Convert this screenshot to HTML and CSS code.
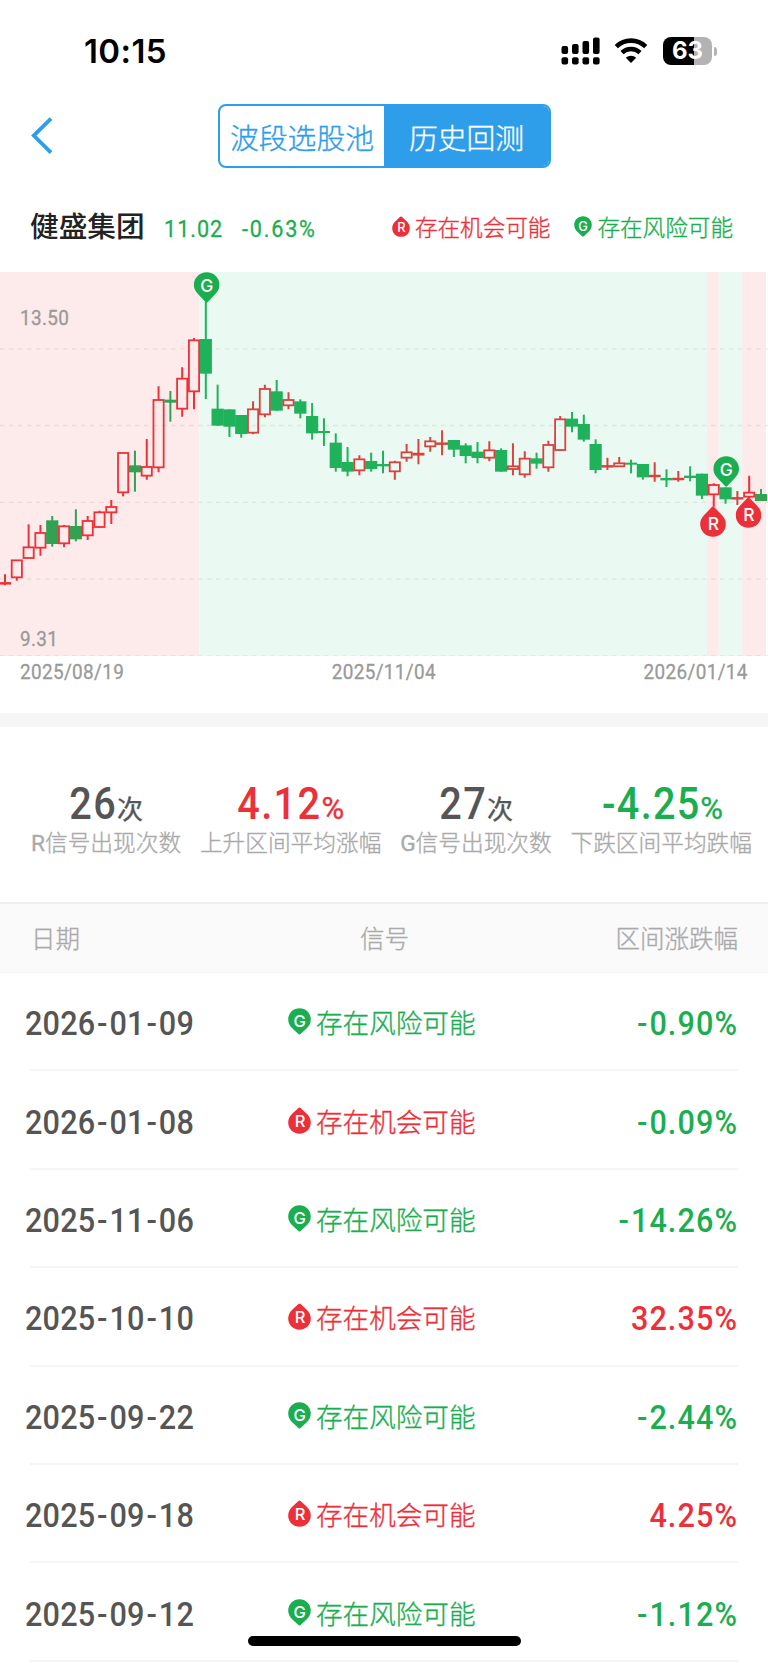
FILE: index.html
```html
<!DOCTYPE html>
<html lang="zh-CN">
<head>
  <meta charset="UTF-8">
  <meta name="viewport" content="width=device-width, initial-scale=1.0">
  <title>历史回测</title>
  <link rel="stylesheet" href="styles.css">
</head>
<body>
  <svg class="defs" width="0" height="0">
    <symbol id="pin-g" viewBox="0 0 26 31">
      <path d="M13 0.3C20 0.3 25.8 5.8 25.8 12.8C25.8 17.5 23.4 20.4 20.6 23.2L13.9 30.2Q13 31 12.1 30.2L5.4 23.2C2.6 20.4 0.2 17.5 0.2 12.8C0.2 5.8 6 0.3 13 0.3Z" fill="#1aae50"/>
      <text x="13.1" y="19.7" class="pin-letter">G</text>
    </symbol>
    <symbol id="pin-r" viewBox="0 0 26 31">
      <path d="M13 30.7C20 30.7 25.8 25.2 25.8 18.2C25.8 13.5 23.4 10.6 20.6 7.8L13.9 0.8Q13 0 12.1 0.8L5.4 7.8C2.6 10.6 0.2 13.5 0.2 18.2C0.2 25.2 6 30.7 13 30.7Z" fill="#ec3039"/>
      <text x="13.3" y="23.8" class="pin-letter">R</text>
    </symbol>
    <symbol id="tag-g" viewBox="0 0 23 27">
      <path d="M11.5 0.2C17.8 0.2 22.8 5.1 22.8 11.4C22.8 15.4 20.9 18.5 18 21L12.6 25.9Q11.5 26.9 10.4 25.9L5 21C2.1 18.5 0.2 15.4 0.2 11.4C0.2 5.1 5.2 0.2 11.5 0.2Z" fill="#1aae50"/>
      <text x="11.6" y="18.7" class="tag-letter">G</text>
    </symbol>
    <symbol id="tag-r" viewBox="0 0 23 27">
      <path d="M11.5 26.8C17.8 26.8 22.8 21.9 22.8 15.6C22.8 11.6 20.9 8.5 18 6L12.6 1.1Q11.5 0.1 10.4 1.1L5 6C2.1 8.5 0.2 11.6 0.2 15.6C0.2 21.9 5.2 26.8 11.5 26.8Z" fill="#ec3039"/>
      <text x="12" y="20.3" class="tag-letter">R</text>
    </symbol>
  </svg>

  <div class="status-bar">
    <span class="time">10:15</span>
    <div class="status-icons">
      <svg width="39" height="28" viewBox="0 0 39 28">
        <rect x="0.5" y="9" width="6.6" height="8" rx="2"/>
        <rect x="11" y="7" width="6.6" height="10" rx="2"/>
        <rect x="21.5" y="4" width="6.6" height="13" rx="2"/>
        <rect x="32" y="0.5" width="6.6" height="16.5" rx="2"/>
        <rect x="0.5" y="20.3" width="6.6" height="7.2" rx="2"/>
        <rect x="11" y="20.3" width="6.6" height="7.2" rx="2"/>
        <rect x="21.5" y="20.3" width="6.6" height="7.2" rx="2"/>
        <rect x="32" y="20.3" width="6.6" height="7.2" rx="2"/>
      </svg>
      <svg class="wifi" width="34" height="26" viewBox="0 0 34 26">
        <path d="M2.3 8.6A21 21 0 0 1 31.7 8.6" fill="none" stroke="#000" stroke-width="4.6"/>
        <path d="M8 14.6A12.9 12.9 0 0 1 26 14.6" fill="none" stroke="#000" stroke-width="4.4"/>
        <path d="M17 25L11.8 19.8A7.4 7.4 0 0 1 22.2 19.8Z"/>
      </svg>
      <div class="battery">63</div>
      <div class="battery-tip"></div>
    </div>
  </div>

  <div class="nav">
    <svg class="back" width="22" height="38" viewBox="0 0 22 38">
      <path d="M20 1.6L2.8 18.6L20 35.6" fill="none" stroke="#2e9dea" stroke-width="3.8"/>
    </svg>
    <div class="tabs">
      <div class="tab">波段选股池</div>
      <div class="tab active">历史回测</div>
    </div>
  </div>

  <div class="stock">
    <span class="name">健盛集团</span>
    <span class="price">11.02</span>
    <span class="change"><i>-</i>0.63%</span>
    <div class="legend">
      <span class="signal red"><svg><use href="#tag-r"/></svg>存在机会可能</span>
      <span class="signal green"><svg><use href="#tag-g"/></svg>存在风险可能</span>
    </div>
  </div>

  <div class="chart">
    <svg id="kline" width="768" height="384" viewBox="0 0 768 384"></svg>
    <div class="dates">
      <span>2025/08/19</span>
      <span>2025/11/04</span>
      <span>2026/01/14</span>
    </div>
  </div>

  <div class="stats">
    <div class="stat">
      <div class="value"><span class="num">26</span><small class="unit">次</small></div>
      <div class="label"><b>R</b>信号出现次数</div>
    </div>
    <div class="stat">
      <div class="value red"><span class="num wide">4.12</span><small>%</small></div>
      <div class="label">上升区间平均涨幅</div>
    </div>
    <div class="stat">
      <div class="value"><span class="num">27</span><small class="unit">次</small></div>
      <div class="label"><b>G</b>信号出现次数</div>
    </div>
    <div class="stat">
      <div class="value green"><span class="num wide"><i>-</i>4.25</span><small>%</small></div>
      <div class="label">下跌区间平均跌幅</div>
    </div>
  </div>

  <div class="table-head">
    <span>日期</span>
    <span>信号</span>
    <span>区间涨跌幅</span>
  </div>
  <div id="rows"></div>

  <div class="home-bar"></div>

  <script src="script.js"></script>
</body>
</html>
```
FILE: styles.css
```css
body {
  margin: 0;
  height: 1663px;
  overflow: hidden;
  background: #fff;
  color: #555;
  font-family: Roboto, "Noto Sans CJK SC", sans-serif;
}
.defs { position: absolute; }
.red { color: #ec3039; }
.green { color: #1aae50; }
i { font-style: normal; }

.pin-letter, .tag-letter {
  font-family: Inter, sans-serif;
  font-weight: 500;
  fill: #fff;
  text-anchor: middle;
  -webkit-text-stroke: 0;
}
.pin-letter { font-size: 17.5px; }
.tag-letter { font-size: 16.5px; }

/* light text, slightly thickened */
.tab, .signal, .label, .table-head {
  font-weight: 300;
  -webkit-text-stroke: 0.35px;
}

/* narrow digits */
.price, .change, .dates span, .num, .date, .rate {
  display: inline-block;
  transform: scaleX(0.9);
  transform-origin: left;
}
.price, .change, .dates span { -webkit-text-stroke: 0.3px; }

/* status bar */
.status-bar {
  display: flex;
  justify-content: space-between;
  align-items: center;
  box-sizing: border-box;
  height: 102px;
  padding: 0 51px 0 84px;
}
.time {
  font: 600 33px Inter, sans-serif;
  letter-spacing: 0.4px;
  color: #000;
}
.status-icons { display: flex; align-items: center; }
.wifi { margin: 0 15px 0 14px; }
.battery {
  width: 49px;
  height: 28px;
  border-radius: 8px;
  background: linear-gradient(90deg, #000 31px, #b3b3b3 31px);
  text-align: center;
  font: 700 24px/28px Inter, sans-serif;
  color: #fff;
}
.battery-tip {
  width: 3px;
  height: 9px;
  margin-left: 2px;
  border-radius: 0 4px 4px 0;
  background: #b3b3b3;
}

/* nav */
.nav {
  display: flex;
  height: 66px;
  padding: 2px 0 0 31px;
}
.back { margin-top: 13px; }
.tabs {
  display: flex;
  box-sizing: border-box;
  width: 333px;
  height: 64px;
  margin-left: 165px;
  border: 2px solid #2e9dea;
  border-radius: 8px;
  overflow: hidden;
}
.tab {
  width: 164px;
  text-align: center;
  font-size: 28.8px;
  line-height: 66px;
  white-space: nowrap;
  color: #2e9dea;
}
.tab.active {
  flex: 1;
  background: #2e9dea;
  color: #fff;
}

/* stock title */
.stock {
  display: flex;
  align-items: baseline;
  height: 102px;
  padding: 0 35px 0 30px;
  line-height: 115px;
  color: #1aae50;
}
.name {
  font-size: 28.7px;
  font-weight: 500;
  color: #222;
}
.price { margin-left: 19px; font-size: 24px; letter-spacing: 1.1px; }
.change { margin-left: 12px; font-size: 24px; letter-spacing: 2px; }
.legend { display: flex; gap: 24px; margin-left: auto; }
.signal {
  display: inline-flex;
  align-items: center;
  font-size: 22.6px;
}
.signal svg { width: 18px; height: 21px; margin: -3px 5px 0 0; }

/* chart */
.chart { height: 441px; border-bottom: 14px solid #f5f5f5; }
.chart svg { display: block; }
.axis { font-size: 21px; fill: #999; stroke: #999; stroke-width: 0.3px; letter-spacing: 0.4px; }
.dates {
  display: flex;
  justify-content: space-between;
  padding: 2px 20px 0 20px;
  font-size: 21px;
  line-height: 28px;
  letter-spacing: 0.4px;
  color: #999;
}
.dates span:nth-child(2) { transform-origin: center; }
.dates span:nth-child(3) { transform-origin: right; }

/* stats */
.stats {
  display: flex;
  justify-content: space-between;
  box-sizing: border-box;
  height: 175px;
  padding: 52px 16px 0 31px;
}
.stat { text-align: center; }
.value {
  height: 50px;
  font-size: 44px;
  line-height: 50px;
  font-weight: 500;
  white-space: nowrap;
}
.value small { font-size: 31px; font-weight: 400; -webkit-text-stroke: 0.4px; }
.value small.unit { font-size: 26px; }
.num {
  margin-left: -5px;
  letter-spacing: 1.5px;
  transform-origin: right;
}
.num.wide { margin-left: -9px; }
.label {
  font-size: 22.7px;
  line-height: 30px;
  color: #aaa;
}
.label b { font-weight: 400; }

/* table */
.table-head {
  display: grid;
  grid-template-columns: 1fr 1fr 1fr;
  box-sizing: border-box;
  height: 71px;
  padding: 0 30px 0 31px;
  border-top: 2px solid #f0f0f0;
  border-bottom: 1px solid #f5f5f5;
  background: #fafafa;
  font-size: 24.5px;
  line-height: 71px;
  color: #aaa;
}
.table-head :nth-child(2) { text-align: center; }
.table-head :nth-child(3) { text-align: right; }
.row {
  display: grid;
  grid-template-columns: 262px 1fr 200px;
  align-items: center;
  box-sizing: border-box;
  height: 98.4px;
  margin: 0 30px;
  border-bottom: 2px solid #f5f5f5;
}
.date {
  margin: 4px 0 0 -5px;
  font-size: 34px;
  font-weight: 500;
  letter-spacing: 0.2px;
}
.date i { margin: 0 2px; }
.row .signal { margin: 1px 0 0 -4px; font-size: 26.6px; }
.row .signal svg { width: 23px; height: 27px; margin: 0 5px 0 0; }
.rate {
  margin: 4px 0 0 0;
  text-align: right;
  font-size: 34px;
  font-weight: 500;
  letter-spacing: 1.2px;
  transform-origin: right;
}
.rate i { margin-right: 1px; }

.home-bar {
  position: fixed;
  left: 248px;
  bottom: 17px;
  width: 273px;
  height: 10px;
  border-radius: 5px;
  background: #000;
}
```
FILE: script.js
```javascript
// [up, high, body top, body bottom, low], in thirds of a pixel
const candles = [
  [1, 907, 933, 935, 940], [1, 865, 865, 916, 926], [1, 757, 826, 858, 858], [1, 759, 783, 827, 851],
  [0, 732, 745, 816, 824], [1, 759, 763, 814, 826], [0, 712, 762, 802, 808], [1, 732, 747, 790, 804],
  [1, 716, 721, 765, 767], [1, 684, 705, 721, 756], [1, 543, 543, 661, 673], [0, 536, 580, 601, 659],
  [1, 501, 585, 611, 623], [1, 343, 384, 586, 601], [0, 357, 383, 392, 449], [1, 286, 320, 410, 434],
  [1, 198, 205, 358, 412], [0, 89, 201, 305, 381], [0, 338, 410, 461, 461], [0, 412, 412, 464, 495],
  [0, 429, 429, 486, 497], [1, 388, 412, 482, 487], [1, 338, 351, 427, 436], [0, 324, 358, 416, 416],
  [1, 361, 384, 400, 412], [0, 382, 388, 425, 439], [0, 393, 432, 484, 503], [0, 439, 477, 483, 522],
  [0, 484, 512, 588, 599], [0, 525, 570, 599, 613], [1, 550, 562, 595, 610], [0, 542, 567, 591, 599],
  [0, 536, 576, 583, 604], [1, 566, 571, 598, 623], [1, 516, 541, 557, 569], [1, 501, 545, 548, 577],
  [1, 495, 508, 523, 539], [1, 475, 514, 516, 550], [0, 504, 504, 533, 555], [0, 514, 520, 552, 574],
  [0, 510, 539, 558, 574], [1, 508, 535, 557, 568], [0, 529, 534, 599, 599], [1, 514, 583, 591, 610],
  [1, 538, 560, 607, 617], [0, 542, 559, 575, 590], [1, 506, 519, 586, 599], [1, 432, 442, 534, 537],
  [0, 420, 440, 464, 481], [0, 428, 456, 503, 509], [0, 502, 516, 594, 604], [1, 557, 582, 584, 594],
  [1, 555, 574, 583, 583], [0, 563, 572, 578, 604], [0, 576, 576, 616, 623], [1, 571, 611, 613, 629],
  [0, 592, 618, 625, 645], [1, 597, 620, 622, 629], [0, 583, 611, 618, 628], [0, 605, 605, 671, 681],
  [1, 634, 639, 667, 704], [0, 646, 646, 682, 695], [1, 657, 678, 680, 699], [1, 611, 662, 674, 679],
  [0, 651, 666, 687, 687]
];

// signal zones: start, end, type
const zones = [
  [0, 199.3, 'R'], [199.3, 707, 'G'], [707, 718.8, 'R'], [718.8, 742.2, 'G'], [742.2, 766, 'R']
];

let svg = '';
zones.forEach(([from, to, type]) => {
  svg += `<rect x="${from}" y="0" width="${to - from}" height="384" fill="${type === 'R' ? '#fdeaea' : '#eafaf2'}"/>`;
});

[76.8, 153.5, 230.4, 307.2, 383.8].forEach(y => {
  svg += `<path d="M0 ${y}H768" stroke="#000" stroke-opacity="0.07" stroke-width="1.3" stroke-dasharray="4.5 4.5"/>`;
});

candles.forEach(([up, h, t, b, l], i) => {
  const x = 5 + i * 11.8125;
  const inRed = zones.find(z => x < z[1])[2] === 'R';
  [h, t, b, l] = [h / 3, t / 3, b / 3, l / 3];
  if (up) {
    const color = inRed ? '#ee3038' : '#d9423f';
    svg += `<path d="M${x} ${h}V${t}M${x} ${b}V${l}" stroke="${color}" stroke-width="2"/>`;
    svg += `<rect x="${x - 5.1}" y="${t}" width="10.2" height="${b - t}" fill="none" stroke="${color}" stroke-width="1.8"/>`;
  } else {
    const color = inRed ? '#31a152' : '#1fb25a';
    svg += `<path d="M${x} ${h}V${l}" stroke="${color}" stroke-width="2"/>`;
    svg += `<rect x="${x - 6.1}" y="${t}" width="12.2" height="${b - t}" fill="${color}"/>`;
  }
});

svg += '<use href="#pin-g" x="193.7" y="0" width="26" height="31"/>';
svg += '<use href="#pin-g" x="713.2" y="184" width="26" height="31"/>';
svg += '<use href="#pin-r" x="700" y="234" width="26" height="31"/>';
svg += '<use href="#pin-r" x="735.5" y="225" width="26" height="31"/>';
svg += '<g transform="translate(20 0) scale(0.9 1)"><text class="axis" y="53">13.50</text>';
svg += '<text class="axis" y="374">9.31</text></g>';
document.getElementById('kline').innerHTML = svg;

const rows = [
  ['2026-01-09', 'G', '-0.90%'],
  ['2026-01-08', 'R', '-0.09%'],
  ['2025-11-06', 'G', '-14.26%'],
  ['2025-10-10', 'R', '32.35%'],
  ['2025-09-22', 'G', '-2.44%'],
  ['2025-09-18', 'R', '4.25%'],
  ['2025-09-12', 'G', '-1.12%']
];

const dash = text => text.replace(/-/g, '<i>-</i>');

document.getElementById('rows').innerHTML = rows.map(([date, type, rate]) => `
  <div class="row">
    <span class="date">${dash(date)}</span>
    <span class="signal ${type === 'G' ? 'green' : 'red'}"><svg><use href="#tag-${type.toLowerCase()}"/></svg>${type === 'G' ? '存在风险可能' : '存在机会可能'}</span>
    <span class="rate ${rate[0] === '-' ? 'green' : 'red'}">${dash(rate)}</span>
  </div>`).join('');
```
